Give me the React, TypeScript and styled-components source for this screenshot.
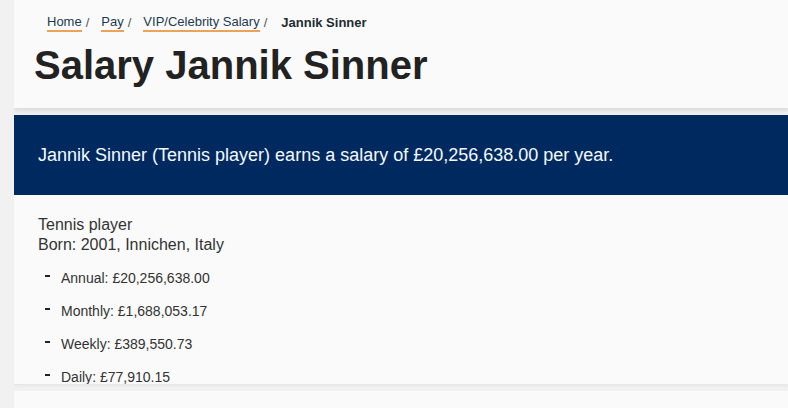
import styled, { createGlobalStyle } from 'styled-components';

const GlobalStyle = createGlobalStyle`
	html, body {
		margin: 0;
		padding: 0;
		background: #f1f1f1;
		font-family: 'Liberation Sans', Arial, sans-serif;
		color: #333;
	}
`;

const crumbs = ['Home', 'Pay', 'VIP/Celebrity Salary'];
const rates = [
	{ label: 'Annual', value: '£20,256,638.00' },
	{ label: 'Monthly', value: '£1,688,053.17' },
	{ label: 'Weekly', value: '£389,550.73' },
	{ label: 'Daily', value: '£77,910.15' },
];

const App = () => {
	return (
		<>
			<GlobalStyle />
			<SPage>
				<SHeader>
					<SCrumbs>
						{crumbs.map((c) => (
							<li key={c}>
								<a href='#'>{c}</a>
								<span className='sep'>/</span>
							</li>
						))}
						<li className='current'>Jannik Sinner</li>
					</SCrumbs>
					<STitle>Salary Jannik Sinner</STitle>
				</SHeader>
				<SBanner>
					Jannik Sinner (Tennis player) earns a salary of £20,256,638.00 per year.
				</SBanner>
				<SContent>
					<p className='job'>Tennis player</p>
					<p className='born'>Born: 2001, Innichen, Italy</p>
					<SRates>
						{rates.map((r) => (
							<li key={r.label}>
								{r.label}: {r.value}
							</li>
						))}
					</SRates>
				</SContent>
				<SFooterCard />
			</SPage>
		</>
	);
};

export default App;

const SPage = styled.div`
	margin-left: 14px;
	height: 408px;
	overflow: hidden;
`;

const SHeader = styled.header`
	background: #fafafa;
	padding: 14px 20px 0;
	height: 94px;
	box-shadow: 0 3px 4px rgba(0, 0, 0, 0.09);
	position: relative;
`;

const SCrumbs = styled.ol`
	list-style: none;
	margin: 0;
	padding: 0 0 0 13px;
	display: flex;
	font-size: 13px;
	line-height: 18px;

	li {
		display: flex;
		color: #3a3a3a;
	}

	a {
		color: #1d3b4f;
		text-decoration: none;
		border-bottom: 2px solid #eba358;
		line-height: 16px;
		height: 16px;
	}

	.sep {
		margin: 0 12px 0 4px;
		color: #555;
	}

	.current {
		font-weight: 700;
		color: #1f2a33;
		padding-left: 2px;
	}
`;

const STitle = styled.h1`
	margin: 9px 0 0;
	font-size: 40px;
	line-height: 48px;
	font-weight: 700;
	color: #222;
`;

const SBanner = styled.div`
	margin-top: 7px;
	background: #002a5f;
	color: #f4f9ff;
	height: 80px;
	display: flex;
	align-items: center;
	padding: 0 24px;
	font-size: 18px;
`;

const SContent = styled.section`
	background: #fafafa;
	padding: 20px 24px 0;
	height: 169px;
	overflow: hidden;
	box-shadow: 0 2px 3px rgba(0, 0, 0, 0.05);
	position: relative;

	p {
		margin: 0;
		font-size: 16px;
		line-height: 20px;
		color: #333;
	}
`;

const SRates = styled.ul`
	list-style: none;
	margin: 15px 0 0;
	padding: 0 0 0 23px;

	li {
		font-size: 14px;
		line-height: 16px;
		color: #333;
		margin-bottom: 17px;
		position: relative;
	}

	li::before {
		content: '';
		position: absolute;
		left: -16px;
		top: 5px;
		width: 5px;
		height: 2px;
		background: #222;
	}
`;

const SFooterCard = styled.div`
	margin-top: 7px;
	background: #fafafa;
	height: 40px;
`;
